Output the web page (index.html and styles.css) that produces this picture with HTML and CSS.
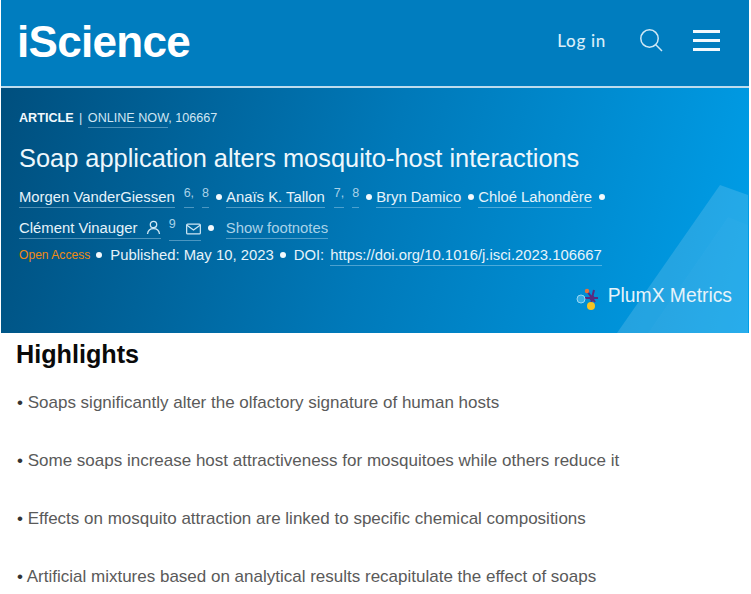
FILE: index.html
```html
<!DOCTYPE html>
<html lang="en">

<head>
    <meta charset="UTF-8">
    <title>Soap application alters mosquito-host interactions</title>
    <link rel="stylesheet" href="styles.css">
</head>

<body>
    <header class="site-header">
        <div class="top-bar">
            <a class="logo">iScience</a>
            <div class="top-actions">
                <a class="login">Log in</a>
                <svg class="search-icon" width="24" height="24" viewBox="0 0 24 24" fill="none" stroke="#cfe8f5" stroke-width="1.5">
                    <circle cx="10.5" cy="10.5" r="8.7" />
                    <path d="M16.8 16.8 L23 23" />
                </svg>
                <div class="menu-icon">
                    <span></span>
                    <span></span>
                    <span></span>
                </div>
            </div>
        </div>

        <div class="banner">
            <svg class="banner-shape" width="132" height="150" viewBox="0 0 132 150">
                <polygon points="0,150 103,2 131,12 131,150" fill="#ffffff" fill-opacity="0.14" />
                <polygon points="31,150 111,34 131,42 131,150" fill="#ffffff" fill-opacity="0.02" />
            </svg>

            <p class="article-line"><b>ARTICLE</b> <span class="sep">|</span> <a class="link">ONLINE NOW</a>, 106667</p>
            <h1 class="title">Soap application alters mosquito-host interactions</h1>

            <div class="authors">
                <a class="link">Morgen VanderGiessen</a>
                <span class="refs"><a class="link">6,</a><a class="link">8</a></span>
                <i class="dot"></i>
                <a class="link">Anaïs K. Tallon</a>
                <span class="refs"><a class="link">7,</a><a class="link">8</a></span>
                <i class="dot"></i>
                <a class="link">Bryn Damico</a>
                <i class="dot"></i>
                <a class="link">Chloé Lahondère</a>
                <i class="dot"></i>
            </div>

            <div class="authors">
                <a class="link person">Clément Vinauger
                    <svg width="15" height="15" viewBox="0 0 15 15" fill="none" stroke="#cfe8f5" stroke-width="1.3">
                        <circle cx="7.5" cy="4.5" r="3.2" />
                        <path d="M1.5 14 C2 10 4.5 8.7 7.5 8.7 C10.5 8.7 13 10 13.5 14" />
                    </svg>
                </a>
                <a class="link mail"><span class="mail-ref">9</span>
                    <svg width="15" height="12" viewBox="0 0 16 12" fill="none" stroke="#cfe8f5" stroke-width="1.3">
                        <rect x="0.7" y="0.7" width="14.6" height="10.6" rx="1" />
                        <path d="M1 2 L8 7 L15 2" />
                    </svg>
                </a>
                <i class="dot"></i>
                <a class="link footnotes">Show footnotes</a>
            </div>

            <div class="meta">
                <span class="open-access">Open Access</span>
                <i class="dot"></i>
                <span>Published: May 10, 2023</span>
                <i class="dot"></i>
                <span>DOI:</span>
                <a class="link doi">https://doi.org/10.1016/j.isci.2023.106667</a>
            </div>

            <div class="plumx">
                <svg class="plumx-icon" width="24" height="24" viewBox="0 0 24 24">
                    <path d="M16 10 L11 3 M16 10 L18 2 M16 10 L22 10 M16 10 L9 10 M16 10 L19 14 M16 10 L15 18" stroke="#5a2a7f" stroke-width="2" />
                    <circle cx="16" cy="10" r="2.5" fill="#5a2a7f" />
                    <circle cx="11" cy="3" r="2.2" fill="#e8743b" />
                    <circle cx="5" cy="11" r="4" fill="#35aee6" stroke="#9ad6f2" />
                    <circle cx="15" cy="18" r="4" fill="#f7c322" />
                </svg>
                <span>PlumX Metrics</span>
            </div>
        </div>
    </header>

    <main class="content">
        <h2 class="highlights-title">Highlights</h2>
        <ul class="highlights">
            <li>Soaps significantly alter the olfactory signature of human hosts</li>
            <li>Some soaps increase host attractiveness for mosquitoes while others reduce it</li>
            <li>Effects on mosquito attraction are linked to specific chemical compositions</li>
            <li>Artificial mixtures based on analytical results recapitulate the effect of soaps</li>
        </ul>
    </main>
</body>

</html>
```

FILE: styles.css
```css
body {
    margin: 0;
    background-color: #fff;
    font-family: "Liberation Sans", Arial, sans-serif;
    overflow: hidden;
}

.site-header {
    margin: 0 2px 0 1px;
    color: #e6f3fa;
}

.top-bar {
    height: 86px;
    display: flex;
    justify-content: space-between;
    align-items: center;
    padding: 0 29px 0 16px;
    background-color: #007dbf;
    border-bottom: 2px solid #bcdcee;
}

.logo {
    margin-bottom: 2px;
    color: #fff;
    font-size: 44px;
    font-weight: bold;
    letter-spacing: -0.7px;
}

.top-actions {
    display: flex;
    align-items: center;
    margin-bottom: 6px;
}

.login {
    font-family: Lato, sans-serif;
    font-size: 17px;
    font-weight: 500;
    letter-spacing: 0.7px;
    color: #d8eef9;
    margin-right: 33px;
}

.search-icon {
    margin-right: 30px;
}

.menu-icon {
    width: 27px;
    display: flex;
    flex-direction: column;
    gap: 6px;
}

.menu-icon span {
    height: 3px;
    background-color: #f2f9fd;
}

.banner {
    position: relative;
    height: 245px;
    box-sizing: border-box;
    padding: 22px 18px 0;
    overflow: hidden;
    background: linear-gradient(105deg, #004f7e 0%, #0079b9 50%, #009fe9 100%);
    font-size: 14.85px;
}

.banner-shape {
    position: absolute;
    right: 0;
    bottom: 0;
}

.link {
    border-bottom: 1px solid rgba(190, 225, 245, 0.4);
    padding-bottom: 2px;
    margin-bottom: -3px;
}

.article-line {
    position: relative;
    margin: 0;
    font-size: 12.6px;
    line-height: 16px;
    color: #cfe6f3;
}

.article-line b {
    color: #f2f9fd;
}

.sep {
    margin: 0 2px;
}

.title {
    position: relative;
    margin: 16px 0 0;
    font-size: 25.4px;
    font-weight: normal;
    line-height: 32px;
    color: #eef7fc;
}

.authors {
    position: relative;
    display: flex;
    align-items: center;
    height: 31px;
    margin-top: 7px;
    white-space: nowrap;
}

.authors + .authors {
    margin-top: 0;
}

.refs {
    display: flex;
    gap: 8px;
    margin: -2px 0 0 9px;
    font-size: 12.5px;
    color: #a9d2e8;
}

.refs .link {
    padding-bottom: 7px;
}

.dot {
    flex: none;
    width: 6px;
    height: 6px;
    margin: 0 4px 0 7px;
    border-radius: 50%;
    background-color: #f2f9fd;
}

.person svg {
    margin-left: 4px;
    vertical-align: -2px;
}

.mail {
    margin-left: 8px;
    color: #a9d2e8;
}

.mail svg {
    margin-left: 6px;
}

.mail-ref {
    font-size: 12.5px;
    line-height: 1;
    vertical-align: 7px;
}

.footnotes {
    margin-left: 8px;
    color: #a9d2e8;
}

.meta {
    position: relative;
    display: flex;
    align-items: center;
    margin-top: 4px;
    white-space: nowrap;
}

.meta .dot {
    margin: 0 8px 0 6px;
}

.doi {
    margin-left: 6px;
}

.open-access {
    font-size: 12.1px;
    color: #f08a12;
}

.plumx {
    position: absolute;
    right: 17px;
    bottom: 21px;
    display: flex;
    align-items: center;
    gap: 8px;
    font-size: 19.3px;
    color: #e6f3fa;
}

.plumx-icon {
    margin-top: 9px;
}

.content {
    padding: 6px 17px 0 16px;
}

.highlights-title {
    margin: 0;
    font-size: 25.2px;
    line-height: 30px;
    color: #0a0a0a;
}

.highlights {
    margin: 0 0 0 1px;
    padding: 0;
    list-style: none;
}

.highlights li {
    margin-top: 39px;
    font-size: 17px;
    line-height: 19px;
    color: #5a5a5a;
}

.highlights li:first-child {
    margin-top: 24px;
}

.highlights li::before {
    content: "• ";
    color: #333;
}
```
